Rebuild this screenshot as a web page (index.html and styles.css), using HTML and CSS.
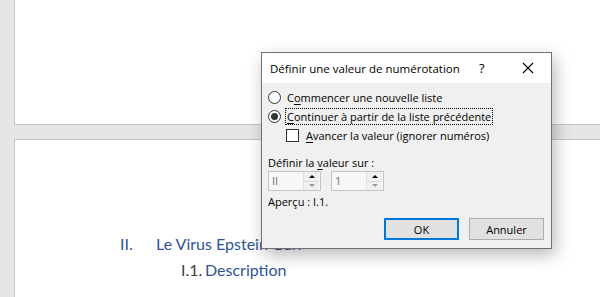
FILE: index.html
```html
<!DOCTYPE html>
<html lang="fr">
<head>
<meta charset="utf-8">
<title>Définir une valeur de numérotation</title>
<link rel="stylesheet" href="styles.css">
</head>
<body>
<div class="doc">
  <div class="page page-top"></div>
  <div class="page page-bottom">
    <div class="h1"><span class="num">II.</span><span>Le Virus Epstein-Barr</span></div>
    <div class="h2"><span class="num2">I.1.</span><span>Description</span></div>
  </div>
</div>

<div class="dialog">
  <div class="titlebar">
    <span class="title">Définir une valeur de numérotation</span>
    <span class="help">?</span>
    <svg class="close" width="12" height="12" viewBox="0 0 12 12"><path d="M1 1L11 11M11 1L1 11" stroke="#000" stroke-width="1.1" fill="none"/></svg>
  </div>
  <div class="body">
    <div class="row"><span class="radio"></span><span class="lbl">C<u>o</u>mmencer une nouvelle liste</span></div>
    <div class="row"><span class="radio checked"></span><span class="lbl focus"><u>C</u>ontinuer à partir de la liste précédente</span></div>
    <div class="row indent"><span class="check"></span><span class="lbl"><u>A</u>vancer la valeur (ignorer numéros)</span></div>
    <div class="label-set">Définir la <u>v</u>aleur sur :</div>
    <div class="spins">
      <div class="spin"><span class="val">II</span><span class="btns"><span class="up"></span><span class="down"></span></span></div>
      <div class="spin"><span class="val">1</span><span class="btns"><span class="up"></span><span class="down"></span></span></div>
    </div>
    <div class="preview">Aperçu : I.1.</div>
    <div class="buttons">
      <button class="btn default">OK</button>
      <button class="btn">Annuler</button>
    </div>
  </div>
</div>
</body>
</html>
```
FILE: styles.css
```css
html, body {
  margin: 0;
  padding: 0;
}
body {
  width: 600px;
  height: 297px;
  overflow: hidden;
  background: #e6e6e6;
  position: relative;
}
.doc {
  display: flex;
  flex-direction: column;
}
.page {
  margin-left: 14px;
  background: #fff;
  border-left: 1px solid #c6c6c6;
}
.page-top {
  height: 124px;
  border-bottom: 1px solid #c6c6c6;
}
.page-bottom {
  box-sizing: border-box;
  margin-top: 14px;
  height: 158px;
  border-top: 1px solid #c6c6c6;
  padding-top: 94px;
  padding-left: 105px;
  font-family: Lato, "Open Sans", sans-serif;
  font-weight: 400;
  font-size: 16px;
  color: #2f5496;
}
.h1 {
  display: flex;
  height: 26px;
  line-height: 20px;
}
.num {
  width: 36px;
}
.h2 {
  display: flex;
  padding-left: 61px;
  line-height: 20px;
}
.num2 {
  width: 24px;
  color: #404040;
}

.dialog {
  position: absolute;
  left: 261px;
  top: 52px;
  width: 289px;
  height: 195px;
  border: 1px solid #707070;
  background: #f0f0f0;
  box-shadow: 3px 6px 16px rgba(0,0,0,0.28);
  font-family: "Open Sans", sans-serif;
  font-size: 11px;
  color: #000;
  display: flex;
  flex-direction: column;
}
.titlebar {
  height: 30px;
  background: #fff;
  display: flex;
  align-items: center;
  padding-left: 8px;
  font-size: 11.5px;
}
.title {
  flex: 1;
}
.help {
  width: 12px;
  margin-right: 31px;
  font-size: 13px;
}
.close {
  margin-right: 17px;
}
.body {
  flex: 1;
  padding: 5px 7px 8px 6px;
  display: flex;
  flex-direction: column;
}
.row {
  display: flex;
  align-items: center;
  height: 19px;
}
.row.indent {
  padding-left: 18px;
}
.radio {
  width: 11px;
  height: 11px;
  border: 1px solid #333;
  border-radius: 50%;
  background: #fff;
  margin-right: 4px;
  position: relative;
}
.radio.checked::after {
  content: "";
  position: absolute;
  left: 2px;
  top: 2px;
  width: 7px;
  height: 7px;
  border-radius: 50%;
  background: #333;
}
.check {
  width: 11px;
  height: 11px;
  border: 1px solid #333;
  background: #fff;
  margin-right: 5px;
}
.lbl {
  padding: 0 1px;
  line-height: 15px;
  border: 1px solid transparent;
}
.lbl.focus {
  border: 1px dotted #000;
}
u {
  text-decoration-thickness: 1px;
  text-underline-offset: 2px;
}
.label-set {
  margin-top: 10px;
  height: 15px;
  line-height: 15px;
}
.spins {
  display: flex;
  gap: 10px;
  margin-top: 1px;
}
.spin {
  width: 51px;
  height: 18px;
  border: 1px solid #c4c4c4;
  background: #f7f7f7;
  display: flex;
  justify-content: space-between;
}
.val {
  padding-left: 3px;
  line-height: 18px;
  color: #6d6d6d;
}
.btns {
  width: 15px;
  display: flex;
  flex-direction: column;
  border-left: 1px solid #e0e0e0;
  margin: 0 1px 0 0;
}
.up, .down {
  flex: 1;
  display: flex;
  align-items: center;
  justify-content: center;
  background: #f0f0f0;
}
.up {
  border-bottom: 1px solid #dadada;
}
.up::after {
  content: "";
  border-left: 3px solid transparent;
  border-right: 3px solid transparent;
  border-bottom: 3px solid #000;
}
.down::after {
  content: "";
  border-left: 3px solid transparent;
  border-right: 3px solid transparent;
  border-top: 3px solid #9a9a9a;
}
.preview {
  margin-top: 3px;
  line-height: 15px;
}
.buttons {
  margin-top: auto;
  display: flex;
  justify-content: flex-end;
  gap: 10px;
}
.btn {
  width: 75px;
  height: 22px;
  background: #e1e1e1;
  border: 1px solid #adadad;
  font-family: "Open Sans", sans-serif;
  font-size: 11px;
  color: #000;
  padding: 0;
}
.btn.default {
  border: 2px solid #0078d7;
}
```
